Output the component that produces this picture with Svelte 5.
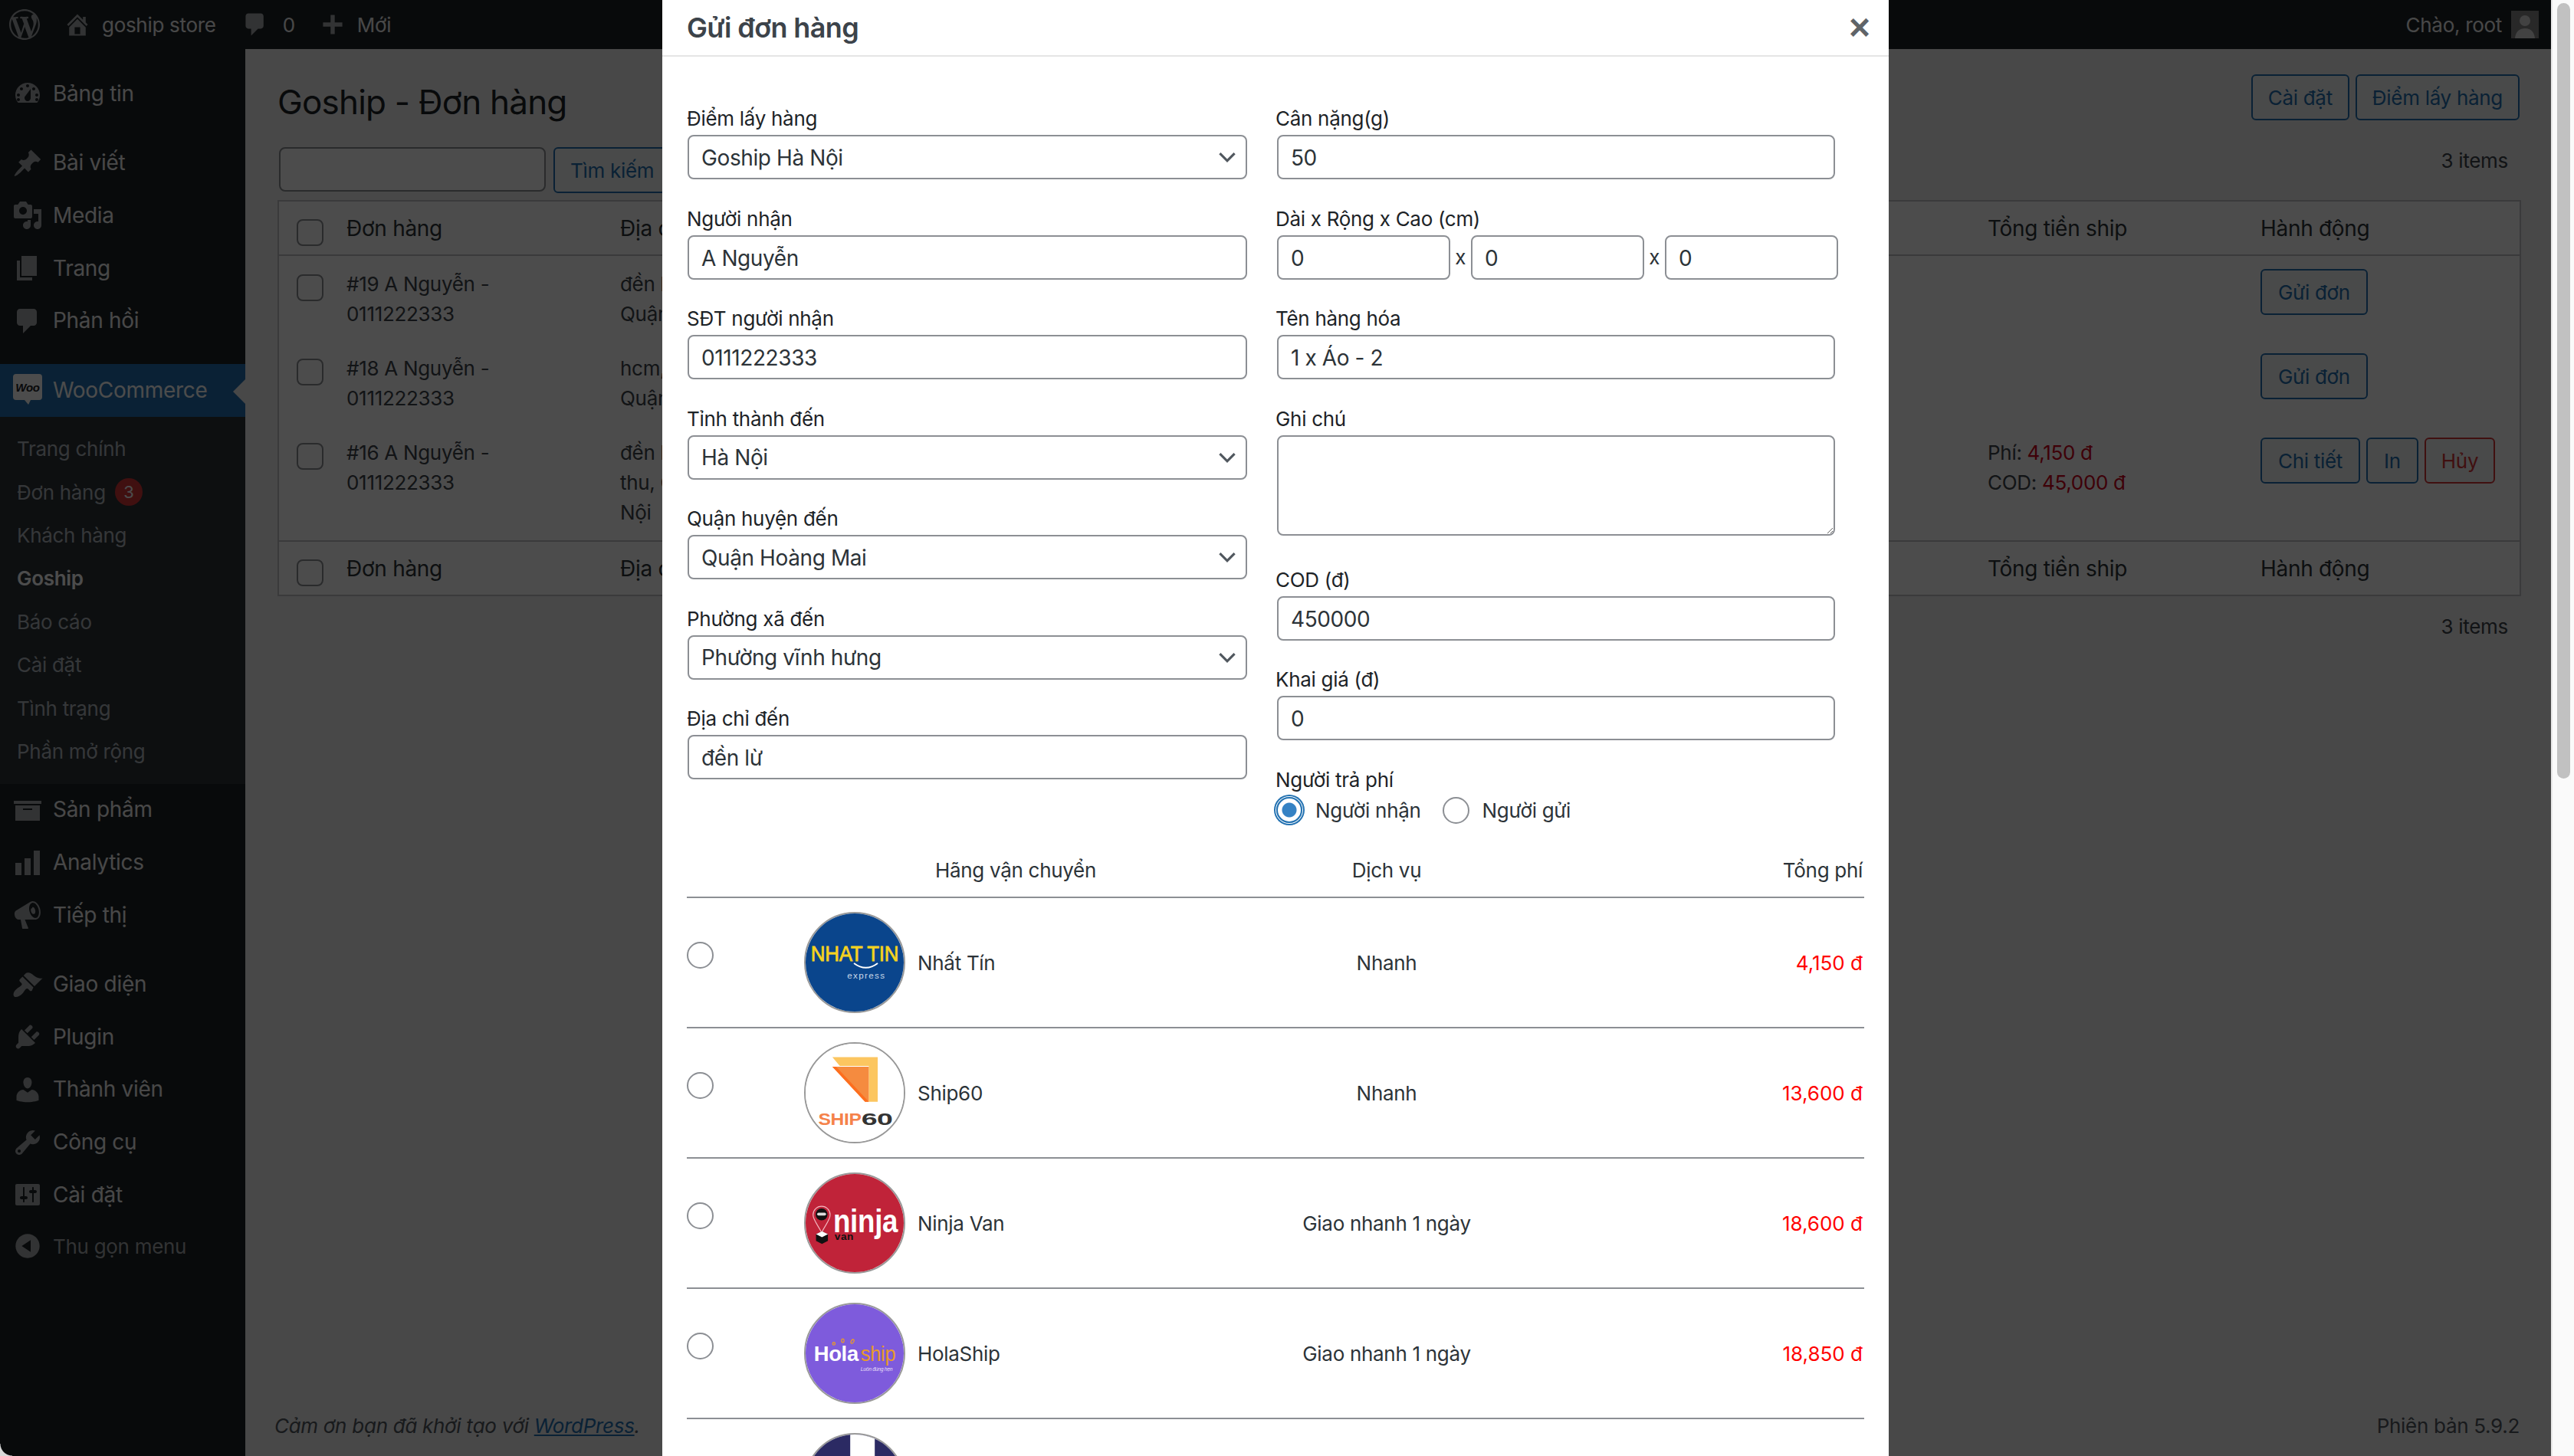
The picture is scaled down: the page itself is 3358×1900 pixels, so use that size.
<script>
  const icons = {
    dashboard: "M3.76 16h12.48c1.1-1.37 1.76-3.11 1.76-5 0-4.42-3.58-8-8-8s-8 3.58-8 8c0 1.89.66 3.63 1.76 5zM10 4c.55 0 1 .45 1 1s-.45 1-1 1-1-.45-1-1 .45-1 1-1zM6 6c.55 0 1 .45 1 1s-.45 1-1 1-1-.45-1-1 .45-1 1-1zm8 0c.55 0 1 .45 1 1s-.45 1-1 1-1-.45-1-1 .45-1 1-1zm-5.37 5.55L12 7v6c0 1.1-.9 2-2 2s-2-.9-2-2c0-.57.24-1.08.63-1.45zM4 10c.55 0 1 .45 1 1s-.45 1-1 1-1-.45-1-1 .45-1 1-1zm12 0c.55 0 1 .45 1 1s-.45 1-1 1-1-.45-1-1 .45-1 1-1zm-12 3c.55 0 1 .45 1 1s-.45 1-1 1-1-.45-1-1 .45-1 1-1zm12 0c.55 0 1 .45 1 1s-.45 1-1 1-1-.45-1-1 .45-1 1-1z",
    post: "M10.44 3.02l1.82-1.82 6.36 6.35-1.83 1.82c-1.05-.68-2.48-.57-3.41.36l-.75.75c-.92.93-1.04 2.35-.35 3.41l-1.83 1.82-2.41-2.41-2.8 2.79c-.42.42-3.38 2.71-3.8 2.29s1.86-3.39 2.28-3.81l2.79-2.79L4.1 9.36l1.83-1.82c1.05.69 2.48.57 3.4-.36l.75-.75c.93-.92 1.05-2.35.36-3.41z",
    media: "M13 11V4c0-.55-.45-1-1-1h-1.67L9 1H5L3.67 3H2c-.55 0-1 .45-1 1v7c0 .55.45 1 1 1h10c.55 0 1-.45 1-1zM7 4.5c1.38 0 2.5 1.12 2.5 2.5S8.38 9.5 7 9.5 4.5 8.38 4.5 7 5.62 4.5 7 4.5zM14 6h5v10.5c0 1.38-1.12 2.5-2.5 2.5S14 17.88 14 16.5s1.12-2.5 2.5-2.5c.17 0 .34.02.5.05V9h-3V6zm-4 8.05V13h2v3.5c0 1.38-1.12 2.5-2.5 2.5S7 17.88 7 16.5 8.12 14 9.5 14c.17 0 .34.02.5.05z",
    page: "M6 15V2h10v13H6zm-1 1h8v2H3V5h2v11z",
    comment: "M5 2h9c1.1 0 2 .9 2 2v7c0 1.1-.9 2-2 2h-2l-5 5v-5H5c-1.1 0-2-.9-2-2V4c0-1.1.9-2 2-2z",
    archive: "M19 4v2H1V4h18zM2 7h16v10H2V7zm11 3V9H7v1h6z",
    chart: "M18 18V2h-4v16h4zm-6 0V7H8v11h4zm-6 0v-8H2v8h4z",
    megaphone: "M18.15 5.94c.46 1.62.38 3.22-.02 4.48-.42 1.28-1.26 2.18-2.3 2.48-.16.06-.26.06-.4.06-.06.02-.12.02-.18.02-.06.02-.14.02-.22.02h-6.8l2.22 5.5c.02.14-.06.26-.14.34-.08.1-.24.16-.34.16H6.95c-.1 0-.26-.06-.34-.16-.08-.08-.16-.2-.14-.34l-1-5.5H4.25l-.02-.02c-.5.06-1.08-.18-1.54-.62s-.88-1.08-1.06-1.88c-.24-.8-.2-1.56-.02-2.2.18-.62.58-1.08 1.06-1.3l.02-.02 9-5.4c.1-.06.18-.1.24-.16.06-.04.14-.08.24-.12.16-.08.28-.12.5-.18 1.04-.3 2.24.1 3.22.98s1.84 2.24 2.26 3.86zm-2.58 5.98h-.02c.4-.1.74-.34 1.04-.7.58-.7.86-1.76.86-3.04 0-.64-.1-1.3-.28-1.98-.34-1.36-1.02-2.5-1.78-3.24s-1.68-1.1-2.46-.88c-.82.22-1.4.96-1.7 2-.32 1.04-.28 2.36.06 3.72.38 1.36 1 2.5 1.8 3.24.78.74 1.62 1.1 2.48.88zm-2.54-7.08c.22-.04.42-.02.62.04.38.16.76.48 1.02 1s.42 1.2.42 1.78c0 .3-.04.56-.12.8-.18.48-.44.84-.86.94-.34.1-.8-.06-1.14-.4-.4-.36-.62-.92-.8-1.5-.1-.42-.1-.88-.02-1.28.1-.42.36-.7.88-.78z",
    brush: "M14.48 11.06L7.41 3.99l1.5-1.5c.5-.56 2.3-.47 3.51.32 1.21.8 1.43 1.28 2.91 2.1 1.18.64 2.45 1.26 4.45.85zm-.71.71L6.7 4.7 4.93 6.47c-.39.39-.39 1.02 0 1.41l1.06 1.06c.39.39.39 1.03 0 1.42-.6.6-1.43 1.11-2.21 1.69-.35.26-.7.53-1.01.84C1.43 13.73 0 16.4 1.2 17.6c1.2 1.2 3.87-.23 5.22-1.57.31-.31.58-.66.84-1.01.58-.78 1.09-1.61 1.69-2.21.39-.39 1.02-.39 1.41 0l1.06 1.06c.39.39 1.02.39 1.41 0z",
    plugin: "M13.11 4.36L9.87 7.6 8 5.73l3.24-3.24c.35-.34 1.05-.2 1.56.32.52.51.66 1.21.31 1.55zm-8 1.77l.91-1.12 9.01 9.01-1.19.84c-.71.71-2.63 1.16-3.82 1.16H6.14L4.9 17.26c-.59.59-1.54.59-2.12 0-.59-.58-.59-1.53 0-2.12l1.24-1.24v-3.88c0-1.13.4-3.19 1.09-3.89zm7.26 3.97l3.24-3.24c.34-.35 1.04-.21 1.55.31.52.51.66 1.21.31 1.55l-3.24 3.25z",
    users: "M10 9.25c-2.27 0-2.73-3.44-2.73-3.44C7 4.02 7.82 2 9.97 2c2.16 0 2.98 2.02 2.71 3.81 0 0-.41 3.44-2.68 3.44zm0 2.57L12.72 10c2.39 0 4.52 2.33 4.52 4.53v2.49s-3.65 1.13-7.24 1.13c-3.65 0-7.24-1.13-7.24-1.13v-2.49c0-2.25 1.94-4.48 4.47-4.48z",
    tools: "M16.68 9.77c-1.34 1.34-3.3 1.67-4.95.99l-5.41 6.52c-.99.99-2.59.99-3.58 0s-.99-2.59 0-3.57l6.52-5.42c-.68-1.65-.35-3.61.99-4.95 1.28-1.28 3.12-1.62 4.72-1.06l-2.89 2.89 2.82 2.82 2.86-2.87c.53 1.58.18 3.39-1.08 4.65zM3.81 16.21c.4.39 1.04.39 1.43 0 .4-.4.4-1.04 0-1.43-.39-.4-1.03-.4-1.43 0-.39.39-.39 1.03 0 1.43z",
    settings: "M18 16V4c0-.55-.45-1-1-1H3c-.55 0-1 .45-1 1v12c0 .55.45 1 1 1h14c.55 0 1-.45 1-1zM8 11h1c.55 0 1 .45 1 1s-.45 1-1 1H8v1.5c0 .28-.22.5-.5.5s-.5-.22-.5-.5V13H6c-.55 0-1-.45-1-1s.45-1 1-1h1V5.5c0-.28.22-.5.5-.5s.5.22.5.5V11zm5-2h-1c-.55 0-1-.45-1-1s.45-1 1-1h1V5.5c0-.28.22-.5.5-.5s.5.22.5.5V7h1c.55 0 1 .45 1 1s-.45 1-1 1h-1v5.5c0 .28-.22.5-.5.5s-.5-.22-.5-.5V9z",
    collapse: "M10 2.16c4.33 0 7.84 3.51 7.84 7.84s-3.51 7.84-7.84 7.84S2.16 14.33 2.16 10 5.71 2.16 10 2.16zm2 11.72V6.12L6.18 9.97z",
    home: "M16 8.5l1.53 1.53-1.06 1.06L10 4.62l-6.47 6.47-1.06-1.06L10 2.5l4 4v-2h2v4zm-6-2.46l6 5.99V18H4v-5.97zM12 17v-5H8v5h4z",
    plus: "M17 8.5v3h-5.5V17h-3v-5.5H3v-3h5.5V3h3v5.5z",
    wp: "M20 10c0-5.51-4.49-10-10-10C4.48 0 0 4.49 0 10c0 5.52 4.48 10 10 10 5.51 0 10-4.48 10-10zM7.78 15.37L4.37 6.22c.55-.02 1.17-.08 1.17-.08.5-.06.44-1.13-.06-1.11 0 0-1.45.11-2.37.11-.18 0-.37 0-.58-.01C4.12 2.69 6.87 1.11 10 1.11c2.33 0 4.45.87 6.05 2.34-.68-.11-1.65.39-1.65 1.58 0 .74.45 1.36.9 2.1.35.61.55 1.36.55 2.46 0 1.49-1.4 5-1.4 5l-3.03-8.37c.54-.02.82-.17.82-.17.5-.05.44-1.25-.06-1.22 0 0-1.44.12-2.38.12-.87 0-2.33-.12-2.33-.12-.5-.03-.56 1.2-.06 1.22l.92.08 1.26 3.41zM17.41 10c.24-.64.74-1.87.43-4.25.7 1.29 1.05 2.71 1.05 4.25 0 3.29-1.73 6.24-4.4 7.78.97-2.59 1.94-5.2 2.92-7.78zM6.1 18.09C3.12 16.65 1.11 13.53 1.11 10c0-1.3.23-2.48.72-3.59C3.25 10.3 4.67 14.2 6.1 18.09zm4.03-6.63l2.58 6.98c-.86.29-1.76.45-2.71.45-.79 0-1.57-.11-2.29-.33.81-2.38 1.62-4.74 2.42-7.1z"
  };

  const menuTop = [
    { label: "Bảng tin", icon: "dashboard" },
    { sep: true },
    { label: "Bài viết", icon: "post" },
    { label: "Media", icon: "media" },
    { label: "Trang", icon: "page" },
    { label: "Phản hồi", icon: "comment" },
    { sep: true }
  ];
  const subMenu = ["Trang chính", "Đơn hàng", "Khách hàng", "Goship", "Báo cáo", "Cài đặt", "Tình trạng", "Phần mở rộng"];
  const menuBottom = [
    { label: "Sản phẩm", icon: "archive" },
    { label: "Analytics", icon: "chart" },
    { label: "Tiếp thị", icon: "megaphone" },
    { sep: true },
    { label: "Giao diện", icon: "brush" },
    { label: "Plugin", icon: "plugin" },
    { label: "Thành viên", icon: "users" },
    { label: "Công cụ", icon: "tools" },
    { label: "Cài đặt", icon: "settings" }
  ];

  const orders = [
    { name: "#19 A Nguyễn -", addr: ["đền lừ, Phường vĩnh hưng,", "Quận Hoàng Mai, Hà Nội"] },
    { name: "#18 A Nguyễn -", addr: ["hcm, Phường Tân Định,", "Quận 1, Hồ Chí Minh"] },
    { name: "#16 A Nguyễn -", addr: ["đền lừ, Phường vĩnh", "thu, Quận Hoàng Mai, Hà", "Nội"], shipped: true }
  ];

  const carriers = [
    { name: "Nhất Tín", service: "Nhanh", fee: "4,150 đ", logo: "nhattin" },
    { name: "Ship60", service: "Nhanh", fee: "13,600 đ", logo: "ship60" },
    { name: "Ninja Van", service: "Giao nhanh 1 ngày", fee: "18,600 đ", logo: "ninja" },
    { name: "HolaShip", service: "Giao nhanh 1 ngày", fee: "18,850 đ", logo: "hola" },
    { name: "", service: "", fee: "", logo: "navy" }
  ];
</script>

{#snippet dash(name)}
  <svg class="dash" viewBox="0 0 20 20"><path d={icons[name]} fill-rule="evenodd" /></svg>
{/snippet}

{#snippet menuList(items)}
  {#each items as item}
    {#if item.sep}
      <li class="sep"></li>
    {:else}
      <li class="item">{@render dash(item.icon)}<span>{item.label}</span></li>
    {/if}
  {/each}
{/snippet}

{#snippet tableHead()}
  <tr>
    <th><span class="check"></span></th>
    <th>Đơn hàng</th>
    <th>Địa chỉ</th>
    <th>Tổng tiền ship</th>
    <th>Hành động</th>
  </tr>
{/snippet}

<div class="screen">
  <div class="viewport">
    <header class="adminbar">
      <div class="bar-left">
        <svg class="bar-wp" viewBox="0 0 20 20"><path d={icons.wp} /></svg>
        <span class="bar-item">{@render dash("home")}goship store</span>
        <span class="bar-item bar-comment">{@render dash("comment")}<span class="count">0</span></span>
        <span class="bar-item">{@render dash("plus")}Mới</span>
      </div>
      <div class="bar-right">
        <span>Chào, root</span>
        <svg class="avatar" viewBox="0 0 36 36">
          <rect width="36" height="36" fill="#888" />
          <circle cx="18" cy="13" r="7" fill="#ddd" />
          <path d="M5 36c1-10 7-13 13-13s12 3 13 13z" fill="#ddd" />
        </svg>
      </div>
    </header>

    <div class="shell">
      <nav class="sidebar">
        <ul class="menu">
          {@render menuList(menuTop)}
          <li class="item active">
            <svg class="woo" viewBox="0 0 40 44">
              <path d="M5 1h30a4 4 0 0 1 4 4v26a4 4 0 0 1-4 4H24l-3 6-5-6H5a4 4 0 0 1-4-4V5a4 4 0 0 1 4-4z" fill="#fff" />
              <text x="20" y="24" text-anchor="middle" class="woo-text">Woo</text>
            </svg>
            <span>WooCommerce</span>
          </li>
          <li class="sub">
            {#each subMenu as sub}
              <div class="sub-item" class:current={sub === "Goship"}>
                {sub}
                {#if sub === "Đơn hàng"}<span class="badge">3</span>{/if}
              </div>
            {/each}
          </li>
          {@render menuList(menuBottom)}
          <li class="item collapse">{@render dash("collapse")}<span>Thu gọn menu</span></li>
        </ul>
      </nav>

      <main class="content">
        <div class="title-row">
          <h1>Goship - Đơn hàng</h1>
          <div class="btns">
            <button class="btn">Cài đặt</button>
            <button class="btn">Điểm lấy hàng</button>
          </div>
        </div>
        <div class="tablenav">
          <div class="search">
            <input class="search-input" type="text" />
            <button class="btn">Tìm kiếm</button>
          </div>
          <span class="items">3 items</span>
        </div>

        <table class="orders">
          <colgroup>
            <col class="c-check" /><col class="c-name" /><col class="c-addr" /><col class="c-ship" /><col class="c-act" />
          </colgroup>
          <thead>{@render tableHead()}</thead>
          <tbody>
            {#each orders as o}
              <tr>
                <td><span class="check"></span></td>
                <td>{o.name}<br />0111222333</td>
                <td>{#each o.addr as line}{line}<br />{/each}</td>
                <td>
                  {#if o.shipped}
                    Phí: <span class="red">4,150 đ</span><br />COD: <span class="red">45,000 đ</span>
                  {/if}
                </td>
                <td>
                  <div class="actions">
                    {#if o.shipped}
                      <button class="btn">Chi tiết</button>
                      <button class="btn">In</button>
                      <button class="btn danger">Hủy</button>
                    {:else}
                      <button class="btn">Gửi đơn</button>
                    {/if}
                  </div>
                </td>
              </tr>
            {/each}
          </tbody>
          <tfoot>{@render tableHead()}</tfoot>
        </table>
        <div class="items items-bottom">3 items</div>

        <footer class="foot">
          <em>Cảm ơn bạn đã khởi tạo với <a href="#top">WordPress</a>.</em>
          <span>Phiên bản 5.9.2</span>
        </footer>
      </main>
    </div>

    <div class="overlay">
      <section class="modal">
        <div class="modal-head">
          <h2>Gửi đơn hàng</h2>
          <button class="close">×</button>
        </div>
        <div class="modal-body">
          <div class="cols">
            <div class="col col-left">
              <div class="field"><label>Điểm lấy hàng</label><select><option>Goship Hà Nội</option></select></div>
              <div class="field"><label>Người nhận</label><input type="text" value="A Nguyễn" /></div>
              <div class="field"><label>SĐT người nhận</label><input type="text" value="0111222333" /></div>
              <div class="field"><label>Tỉnh thành đến</label><select><option>Hà Nội</option></select></div>
              <div class="field"><label>Quận huyện đến</label><select><option>Quận Hoàng Mai</option></select></div>
              <div class="field"><label>Phường xã đến</label><select><option>Phường vĩnh hưng</option></select></div>
              <div class="field"><label>Địa chỉ đến</label><input type="text" value="đền lừ" /></div>
            </div>
            <div class="col col-right">
              <div class="field"><label>Cân nặng(g)</label><input type="text" value="50" /></div>
              <div class="field">
                <label>Dài x Rộng x Cao (cm)</label>
                <div class="dims">
                  <input type="text" value="0" /><span>x</span><input type="text" value="0" /><span>x</span><input type="text" value="0" />
                </div>
              </div>
              <div class="field"><label>Tên hàng hóa</label><input type="text" value="1 x Áo - 2" /></div>
              <div class="field"><label>Ghi chú</label><textarea></textarea></div>
              <div class="field"><label>COD (đ)</label><input type="text" value="450000" /></div>
              <div class="field"><label>Khai giá (đ)</label><input type="text" value="0" /></div>
              <div class="payer">
                <label>Người trả phí</label>
                <div class="payer-opts">
                  <input class="radio focused" type="radio" name="payer" checked /><span>Người nhận</span>
                  <input class="radio" type="radio" name="payer" /><span>Người gửi</span>
                </div>
              </div>
            </div>
          </div>

          <table class="carriers">
            <colgroup>
              <col class="k-radio" /><col class="k-name" /><col class="k-service" /><col class="k-fee" />
            </colgroup>
            <thead>
              <tr><th></th><th>Hãng vận chuyển</th><th>Dịch vụ</th><th class="fee-head">Tổng phí</th></tr>
            </thead>
            <tbody>
              {#each carriers as c}
                <tr>
                  <td class="radio-cell"><input class="radio" type="radio" name="carrier" /></td>
                  <td>
                    <div class="carrier">
                      <svg class="logo" viewBox="0 0 132 132">
                        {#if c.logo === "nhattin"}
                          <rect width="132" height="132" fill="#0a458c" />
                          <text x="66" y="64" class="l-nhat" textLength="118" lengthAdjust="spacingAndGlyphs">NHAT TIN</text>
                          <path d="M65 67q16 12 32 0" fill="none" stroke="#fff" stroke-width="2" />
                          <text x="81" y="88" class="l-express" textLength="50">express</text>
                        {:else if c.logo === "ship60"}
                          <rect width="132" height="132" fill="#fff" />
                          <polygon points="36,18 97,18 97,78 85,78 85,30 46,30" fill="#fcc660" />
                          <polygon points="36,31 85,31 85,78 80,78" fill="#f58b3f" />
                          <polygon points="36,31 41,31 85,78 80,78" fill="#fd6e1e" />
                          <text x="17" y="109" class="l-ship" textLength="58" lengthAdjust="spacingAndGlyphs">SHIP</text>
                          <text x="75" y="109" class="l-sixty" textLength="42" lengthAdjust="spacingAndGlyphs">60</text>
                        {:else if c.logo === "ninja"}
                          <rect width="132" height="132" fill="#c02339" />
                          <path d="M10 55a11.5 11.5 0 0 1 23 0c0 7-7 14-11.500 24c-4.500-10-11.500-17-11.500-24z" fill="none" stroke="#f3b8c0" stroke-width="1.200" />
                          <circle cx="21.500" cy="54.500" r="8" fill="#111" />
                          <rect x="15.500" y="52" width="12" height="4" rx="2" fill="#ddd" />
                          <polygon points="22,77 30,81 30,90 22,94 14,90 14,81" fill="#111" />
                          <polygon points="22,77 30,81 22,85 14,81" fill="#fff" />
                          <text x="37" y="78" class="l-ninja" textLength="87" lengthAdjust="spacingAndGlyphs">ninja</text>
                          <text x="39" y="89" class="l-van" textLength="25">van</text>
                        {:else if c.logo === "hola"}
                          <rect width="132" height="132" fill="#7e5bdc" />
                          <g fill="none" stroke="#e79a2b" stroke-width="1.300">
                            <circle cx="38" cy="53" r="1.700" />
                            <ellipse cx="50" cy="49" rx="1.700" ry="2.500" />
                            <ellipse cx="63" cy="50" rx="1.700" ry="3" transform="rotate(30 63 50)" />
                          </g>
                          <text x="11" y="76" class="l-hola" textLength="60" lengthAdjust="spacingAndGlyphs">Hola</text>
                          <text x="74" y="76" class="l-holaship" textLength="47" lengthAdjust="spacingAndGlyphs">ship</text>
                          <text x="74" y="90" class="l-hola-sub">Luôn đúng hẹn</text>
                        {:else}
                          <rect width="132" height="132" fill="#2b2a63" />
                          <rect x="60" width="33" height="132" fill="#fff" />
                        {/if}
                      </svg>
                      <span>{c.name}</span>
                    </div>
                  </td>
                  <td class="center">{c.service}</td>
                  <td class="fee">{c.fee}</td>
                </tr>
              {/each}
            </tbody>
          </table>
        </div>
      </section>
    </div>
  </div>

  <div class="scrollbar"><div class="thumb"></div></div>
</div>

<style>
  :global(body) {
    margin: 0;
    overflow: hidden;
    font-family: Inter, "Noto Sans", sans-serif;
  }
  ul { list-style: none; margin: 0; padding: 0; }

  .screen { position: relative; display: flex; width: 3358px; height: 1900px; overflow: hidden; }
  .screen::after { content: ""; position: absolute; left: 0; bottom: 0; width: 16px; height: 16px; background: radial-gradient(circle at 100% 0, transparent 15px, #d8d8d8 16px); }
  .viewport { position: relative; width: 3328px; height: 1900px; overflow: hidden; background: #f0f0f1; color: #3c434a; font-size: 26px; line-height: 39px; letter-spacing: -0.3px; }
  .scrollbar { width: 30px; background: #fafafa; border-left: 2px solid #e8e8e8; box-sizing: border-box; padding: 4px 5px 0 6px; }
  .thumb { height: 1012px; border-radius: 12px; background: #c1c1c1; }

  /* admin bar */
  .adminbar { display: flex; justify-content: space-between; align-items: center; height: 64px; background: #1d2327; color: #f0f0f1; padding: 0 16px 0 12px; box-sizing: border-box; }
  .bar-left { display: flex; align-items: center; }
  .bar-wp { width: 40px; height: 40px; fill: #a7aaad; margin-right: 31px; }
  .bar-item { display: flex; align-items: center; margin-right: 33px; }
  .bar-comment { margin-right: 31px; }
  .bar-item .dash { width: 36px; height: 36px; fill: #a7aaad; margin-right: 14px; }
  .count { margin-left: 4px; }
  .bar-right { display: flex; align-items: center; gap: 12px; }
  .avatar { width: 36px; height: 36px; }

  /* shell */
  .shell { display: flex; height: 1836px; }
  .sidebar { width: 320px; flex: none; background: #1d2327; padding-top: 24px; box-sizing: border-box; }
  .item { display: flex; align-items: center; height: 68.600px; color: #f0f0f1; font-size: 28px; padding-left: 16px; }
  .dash { width: 40px; height: 40px; fill: #a7aaad; flex: none; }
  .item .dash { margin-right: 13px; }
  .sep { height: 22px; }
  .active { position: relative; background: #2271b1; color: #fff; }
  .active::after { content: ""; position: absolute; right: 0; top: 20px; border: 16px solid transparent; border-left: 0; border-right-color: #f0f0f1; }
  .woo { width: 40px; height: 44px; margin-right: 13px; }
  .woo-text { font: italic 700 15px "Liberation Sans", sans-serif; fill: #1d2327; }
  .sub { background: #2c3338; padding: 14px 0; }
  .sub-item { height: 56.400px; display: flex; align-items: center; gap: 12px; padding-left: 22px; font-size: 26px; color: rgba(240, 246, 252, 0.7); }
  .current { color: #fff; font-weight: 600; }
  .badge { display: inline-flex; align-items: center; justify-content: center; width: 36px; height: 36px; border-radius: 50%; background: #d63638; color: #fff; font-size: 22px; }
  .collapse { color: #a7aaad; font-size: 26px; height: 66px; }

  /* content */
  .content { position: relative; flex: 1; padding: 33px 41px 0 42px; box-sizing: border-box; min-width: 0; }
  .title-row { display: flex; justify-content: space-between; height: 95px; }
  h1 { margin: 6px 0 0; font-size: 44px; line-height: 60px; font-weight: 400; color: #1d2327; letter-spacing: -0.8px; }
  .btns { display: flex; gap: 8px; }
  .btn { height: 60px; padding: 0 20px; border: 2px solid #2271b1; border-radius: 6px; background: #f6f7f7; color: #2271b1; font: inherit; font-size: 26px; letter-spacing: -0.3px; box-sizing: border-box; white-space: nowrap; }
  .danger { border-color: #d63638; color: #d63638; }
  .tablenav { display: flex; justify-content: space-between; height: 69px; }
  .search { display: flex; gap: 10px; padding-left: 2px; }
  .search-input { width: 348px; height: 58px; box-sizing: border-box; border: 2px solid #8c8f94; border-radius: 8px; background: #fff; }
  .items { padding-right: 15px; line-height: 36px; }
  .items-bottom { text-align: right; margin-top: 22px; }

  .orders { width: 2925px; table-layout: fixed; border-collapse: separate; border-spacing: 0; border: 2px solid #c3c4c7; background: #fff; }
  .c-check { width: 68px; }
  .c-name { width: 357px; }
  .c-addr { width: 1784px; }
  .c-ship { width: 356px; }
  .c-act { width: 358px; }
  .orders th { font-weight: 400; text-align: left; padding: 16px 20px 14px; color: #2c3338; font-size: 28px; border-bottom: 2px solid #c3c4c7; height: 39px; }
  .orders tfoot th { border-bottom: 0; border-top: 2px solid #c3c4c7; }
  .orders td { padding: 17px 20px 15px; vertical-align: top; height: 78px; white-space: nowrap; }
  .orders tbody tr:last-child td { padding-bottom: 17px; }
  .check { display: block; width: 35px; height: 35px; margin: 7px 0 0 3px; border: 2px solid #8c8f94; border-radius: 8px; background: #fff; box-sizing: border-box; }
  .orders th .check { margin: 6px 0 -3px 3px; }
  .red { color: #d0021b; }
  .actions { display: flex; gap: 8px; }
  .actions .btn { padding: 0 21px; }
  .actions .danger { padding: 0 20px; }
  .foot { position: absolute; left: 38px; right: 41px; bottom: 20px; display: flex; justify-content: space-between; color: #50575e; }
  .foot a { color: #2271b1; }

  /* modal */
  .overlay { position: absolute; inset: 0; display: flex; justify-content: center; background: rgba(0, 0, 0, 0.7); }
  .modal { width: 1600px; height: 1900px; overflow: hidden; background: #fff; }
  .modal-head { display: flex; justify-content: space-between; align-items: center; height: 72px; padding: 0 24px 0 32px; border-bottom: 2px solid #e5e5e5; }
  h2 { margin: 0; font-size: 36px; line-height: 72px; font-weight: 600; color: #3c434a; letter-spacing: -0.6px; }
  .close { border: 0; background: none; padding: 0; font: 700 48px/1 "Liberation Sans", sans-serif; color: #5f6468; }
  .modal-body { padding: 60px 32px 0; color: #2c3338; font-size: 28px; }
  .cols { display: grid; grid-template-columns: 768px 768px; }
  .col-left { padding-left: 1px; }
  .col-right { padding-left: 2px; }
  .field { height: 130.500px; }
  .field:has(textarea) { height: 210px; }
  label { display: block; height: 42px; line-height: 42px; margin-left: -1px; color: #1d2327; font-size: 26px; }
  .col-right label { margin-left: -2px; }
  .modal input[type="text"], select, textarea { display: block; width: 730px; height: 58px; box-sizing: border-box; border: 2px solid #8c8f94; border-radius: 8px; background: #fff; color: #2c3338; font: inherit; letter-spacing: -0.4px; padding: 2px 16px 0; margin: 0; }
  .modal .col-right input[type="text"], textarea { width: 728px; }
  select { appearance: none; background-image: url("data:image/svg+xml;utf8,<svg xmlns='http://www.w3.org/2000/svg' viewBox='0 0 20 20'><path d='M4 7l6 6 6-6' fill='none' stroke='%2350575e' stroke-width='2'/></svg>"); background-repeat: no-repeat; background-position: right 8px top 50%; background-size: 32px 32px; }
  textarea { height: 131px; }
  .dims { display: flex; align-items: center; width: 732px; }
  .modal .col-right .dims input[type="text"] { width: 225.500px; flex: none; }
  .dims span { width: 27.500px; text-align: center; font-size: 26px; }
  .payer label { height: 39px; line-height: 39px; }
  .payer { margin-top: 1.500px; }
  .payer-opts { display: flex; align-items: center; height: 40px; font-size: 26px; }
  .radio { appearance: none; flex: none; width: 35px; height: 35px; margin: 0; border: 2px solid #8c8f94; border-radius: 50%; background: #fff; box-sizing: border-box; }
  .payer-opts span { margin: 0 28px 0 17px; }
  .focused { width: 34px; height: 34px; margin-left: -1px; border-color: #2271b1; box-shadow: 0 0 0 1px #fff, 0 0 0 3px #2271b1; position: relative; }
  .focused:checked { background: radial-gradient(circle, #3582c4 0 9px, #fff 10px); }

  .carriers { width: 1536px; margin-top: 24px; table-layout: fixed; border-collapse: collapse; font-size: 26px; }
  .k-radio { width: 153px; }
  .k-name { width: 552px; }
  .k-service { width: 416px; }
  .k-fee { width: 415px; }
  .carriers th { font-weight: 400; padding: 15px 0; border-bottom: 2px solid #8c8f94; font-size: 26px; line-height: 39px; }
  .carriers .fee-head { text-align: right; padding-right: 2px; }
  .carriers td { padding: 18px 0; border-bottom: 2px solid #8c8f94; }
  .carriers .radio-cell { vertical-align: top; padding-top: 57px; }
  .carriers .fee { text-align: right; color: #f00; letter-spacing: 0; padding-right: 2px; }
  .carrier { display: flex; align-items: center; gap: 16px; }
  .logo { width: 132px; height: 132px; box-sizing: border-box; border: 2px solid #999; border-radius: 50%; display: block; }
  .center { text-align: center; }

  .l-nhat { font: 400 28px "Liberation Sans", sans-serif; fill: #f5d21f; stroke: #f5d21f; stroke-width: 0.8; text-anchor: middle; }
  .l-express { font: 400 12px "Liberation Sans", sans-serif; fill: #c8d8e8; text-anchor: middle; }
  .l-ship { font: 700 22px "Liberation Sans", sans-serif; fill: #f5824a; }
  .l-sixty { font: 700 22px "Liberation Sans", sans-serif; fill: #333; }
  .l-ninja { font: 700 44px "Liberation Sans", sans-serif; fill: #fff; }
  .l-van { font: 700 14px "Liberation Sans", sans-serif; fill: #111; }
  .l-hola { font: 700 28px "Liberation Sans", sans-serif; fill: #fff; }
  .l-holaship { font: 400 28px "Liberation Sans", sans-serif; fill: #e79a2b; }
  .l-hola-sub { font: italic 400 7px "Liberation Sans", sans-serif; fill: #e6def8; }
</style>
